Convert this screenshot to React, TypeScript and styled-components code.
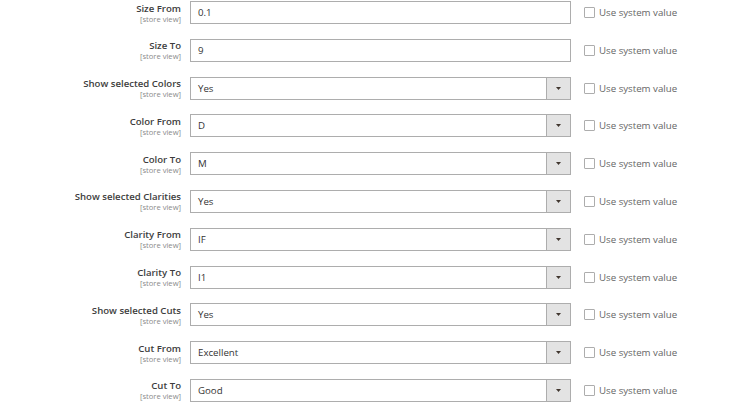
import React from "react";
import styled, { createGlobalStyle } from "styled-components";

type Field = {
  label: string;
  value: string;
  select?: boolean;
};

const fields: Field[] = [
  { label: "Size From", value: "0.1" },
  { label: "Size To", value: "9" },
  { label: "Show selected Colors", value: "Yes", select: true },
  { label: "Color From", value: "D", select: true },
  { label: "Color To", value: "M", select: true },
  { label: "Show selected Clarities", value: "Yes", select: true },
  { label: "Clarity From", value: "IF", select: true },
  { label: "Clarity To", value: "I1", select: true },
  { label: "Show selected Cuts", value: "Yes", select: true },
  { label: "Cut From", value: "Excellent", select: true },
  { label: "Cut To", value: "Good", select: true },
];

const App: React.FC = () => {
  return (
    <>
      <GlobalStyle />
      <Form>
        {fields.map((f) => (
          <Row key={f.label}>
            <Label>
              <Title>{f.label}</Title>
              <Scope>[store view]</Scope>
            </Label>
            <Control>
              <Value>{f.value}</Value>
              {f.select && (
                <ArrowButton>
                  <svg width="5" height="3" viewBox="0 0 5 3">
                    <path d="M0 0 L5 0 L2.5 3 Z" fill="#41362f" />
                  </svg>
                </ArrowButton>
              )}
            </Control>
            <SystemValue>
              <Checkbox />
              <span>Use system value</span>
            </SystemValue>
          </Row>
        ))}
      </Form>
    </>
  );
};

export default App;

const GlobalStyle = createGlobalStyle`
  html, body {
    margin: 0;
    padding: 0;
    background: #ffffff;
  }
  body {
    font-family: "Open Sans", "Liberation Sans", sans-serif;
    color: #303030;
  }
`;

const Form = styled.div`
  display: flex;
  flex-direction: column;
  padding-top: 1px;
  width: 750px;
`;

const Row = styled.div`
  display: grid;
  grid-template-columns: 181px 381px auto;
  column-gap: 9px;
  align-items: start;
  height: 37.8px;
`;

const Label = styled.div`
  display: flex;
  flex-direction: column;
  align-items: flex-end;
  padding-top: 1.5px;
`;

const Title = styled.span`
  font-size: 9.6px;
  line-height: 12px;
  font-weight: 600;
  color: #3d3d3d;
  white-space: nowrap;
`;

const Scope = styled.span`
  font-size: 7.6px;
  line-height: 9px;
  color: #8a8a8a;
  white-space: nowrap;
`;

const Control = styled.div`
  display: flex;
  align-items: stretch;
  height: 23px;
  border: 1px solid #adadad;
  background: #ffffff;
  box-sizing: border-box;
`;

const Value = styled.span`
  flex: 1;
  display: flex;
  align-items: center;
  padding-left: 7px;
  font-size: 9.7px;
  color: #333333;
`;

const ArrowButton = styled.span`
  width: 23px;
  display: flex;
  align-items: center;
  justify-content: center;
  background: #e3e3e3;
  border-left: 1px solid #adadad;
`;

const SystemValue = styled.label`
  display: flex;
  align-items: center;
  gap: 4px;
  height: 23px;
  margin-left: 4px;
  font-size: 9.7px;
  color: #666666;
  white-space: nowrap;
`;

const Checkbox = styled.span`
  width: 11px;
  height: 11px;
  box-sizing: border-box;
  border: 1px solid #adadad;
  border-radius: 1px;
  background: #ffffff;
`;
